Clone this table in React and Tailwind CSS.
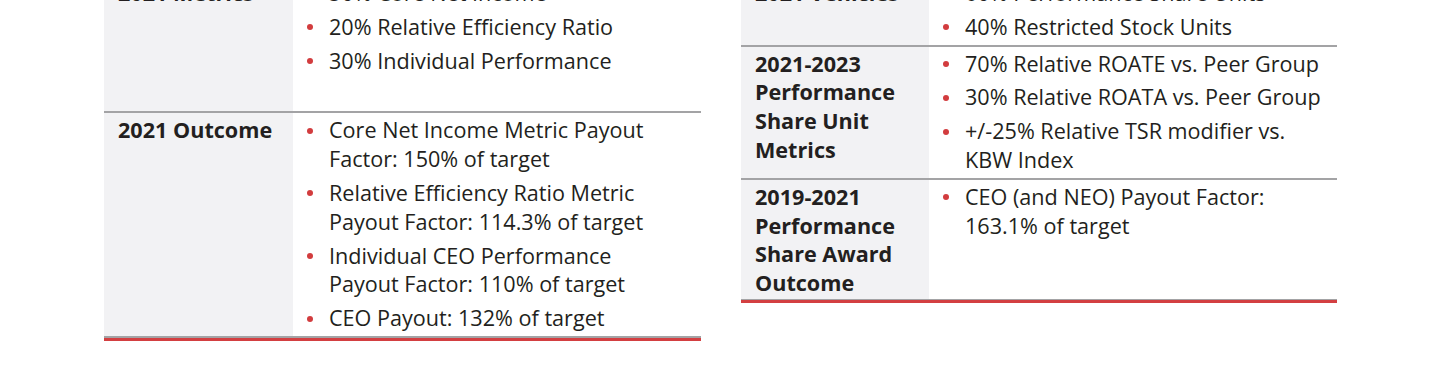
import React from "react";

const leftRows = [
  {
    label: "2021 Metrics",
    items: [
      "50% Core Net Income",
      "20% Relative Efficiency Ratio",
      "30% Individual Performance",
    ],
    extra: true,
  },
  {
    label: "2021 Outcome",
    items: [
      "Core Net Income Metric Payout Factor: 150% of target",
      "Relative Efficiency Ratio Metric Payout Factor: 114.3% of target",
      "Individual CEO Performance Payout Factor: 110% of target",
      "CEO Payout: 132% of target",
    ],
  },
];

const rightRows = [
  {
    label: "2021 Vehicles",
    items: ["60% Performance Share Units", "40% Restricted Stock Units"],
  },
  {
    label: "2021-2023 Performance Share Unit Metrics",
    items: [
      "70% Relative ROATE vs. Peer Group",
      "30% Relative ROATA vs. Peer Group",
      "+/-25% Relative TSR modifier vs. KBW Index",
    ],
  },
  {
    label: "2019-2021 Performance Share Award Outcome",
    items: ["CEO (and NEO) Payout Factor: 163.1% of target"],
  },
];

const Table = ({ rows, labelWidth, padRight, lastBorder }) => (
  <div className="flex flex-col border-b-[3px] border-[#d33f41]">
    {rows.map((row, i) => (
      <div
        key={i}
        className={`flex ${i > 0 ? "border-t-2 border-[#a3a3a5]" : ""} ${
          i === rows.length - 1 ? lastBorder : ""
        }`}
      >
        <div
          className={`${labelWidth} shrink-0 bg-[#f2f2f4] pl-[14px] pr-2 pt-[3px] pb-[1px] font-bold text-[#231f20]`}
        >
          {row.label}
        </div>
        <ul
          className={`flex-1 flex flex-col gap-[5px] pl-[14px] ${padRight} pt-[3px] ${
            row.extra ? "pb-[36px]" : "pb-[3px]"
          }`}
        >
          {row.items.map((item, j) => (
            <li key={j} className="flex items-start">
              <span className="mt-[11.5px] w-[6px] h-[6px] rounded-full bg-[#d23c3e] shrink-0" />
              <span className="ml-[16px]">{item}</span>
            </li>
          ))}
        </ul>
      </div>
    ))}
  </div>
);

export default function App() {
  return (
    <div
      className="h-[375px] overflow-hidden bg-white text-[#231f20] text-[21.6px] leading-[28.8px]"
      style={{ fontFamily: '"Open Sans", "Noto Sans", sans-serif' }}
    >
      <div className="flex items-start gap-[40px] pl-[104px] -mt-[24px]">
        <div className="w-[597px]">
          <Table
            rows={leftRows}
            labelWidth="w-[189px]"
            padRight="pr-[24px]"
            lastBorder="border-b-2 border-[#a3a3a5]"
          />
        </div>
        <div className="w-[596px]">
          <Table
            rows={rightRows}
            labelWidth="w-[188px]"
            padRight="pr-[8px]"
            lastBorder="border-b border-[#a3a3a5]"
          />
        </div>
      </div>
    </div>
  );
}
